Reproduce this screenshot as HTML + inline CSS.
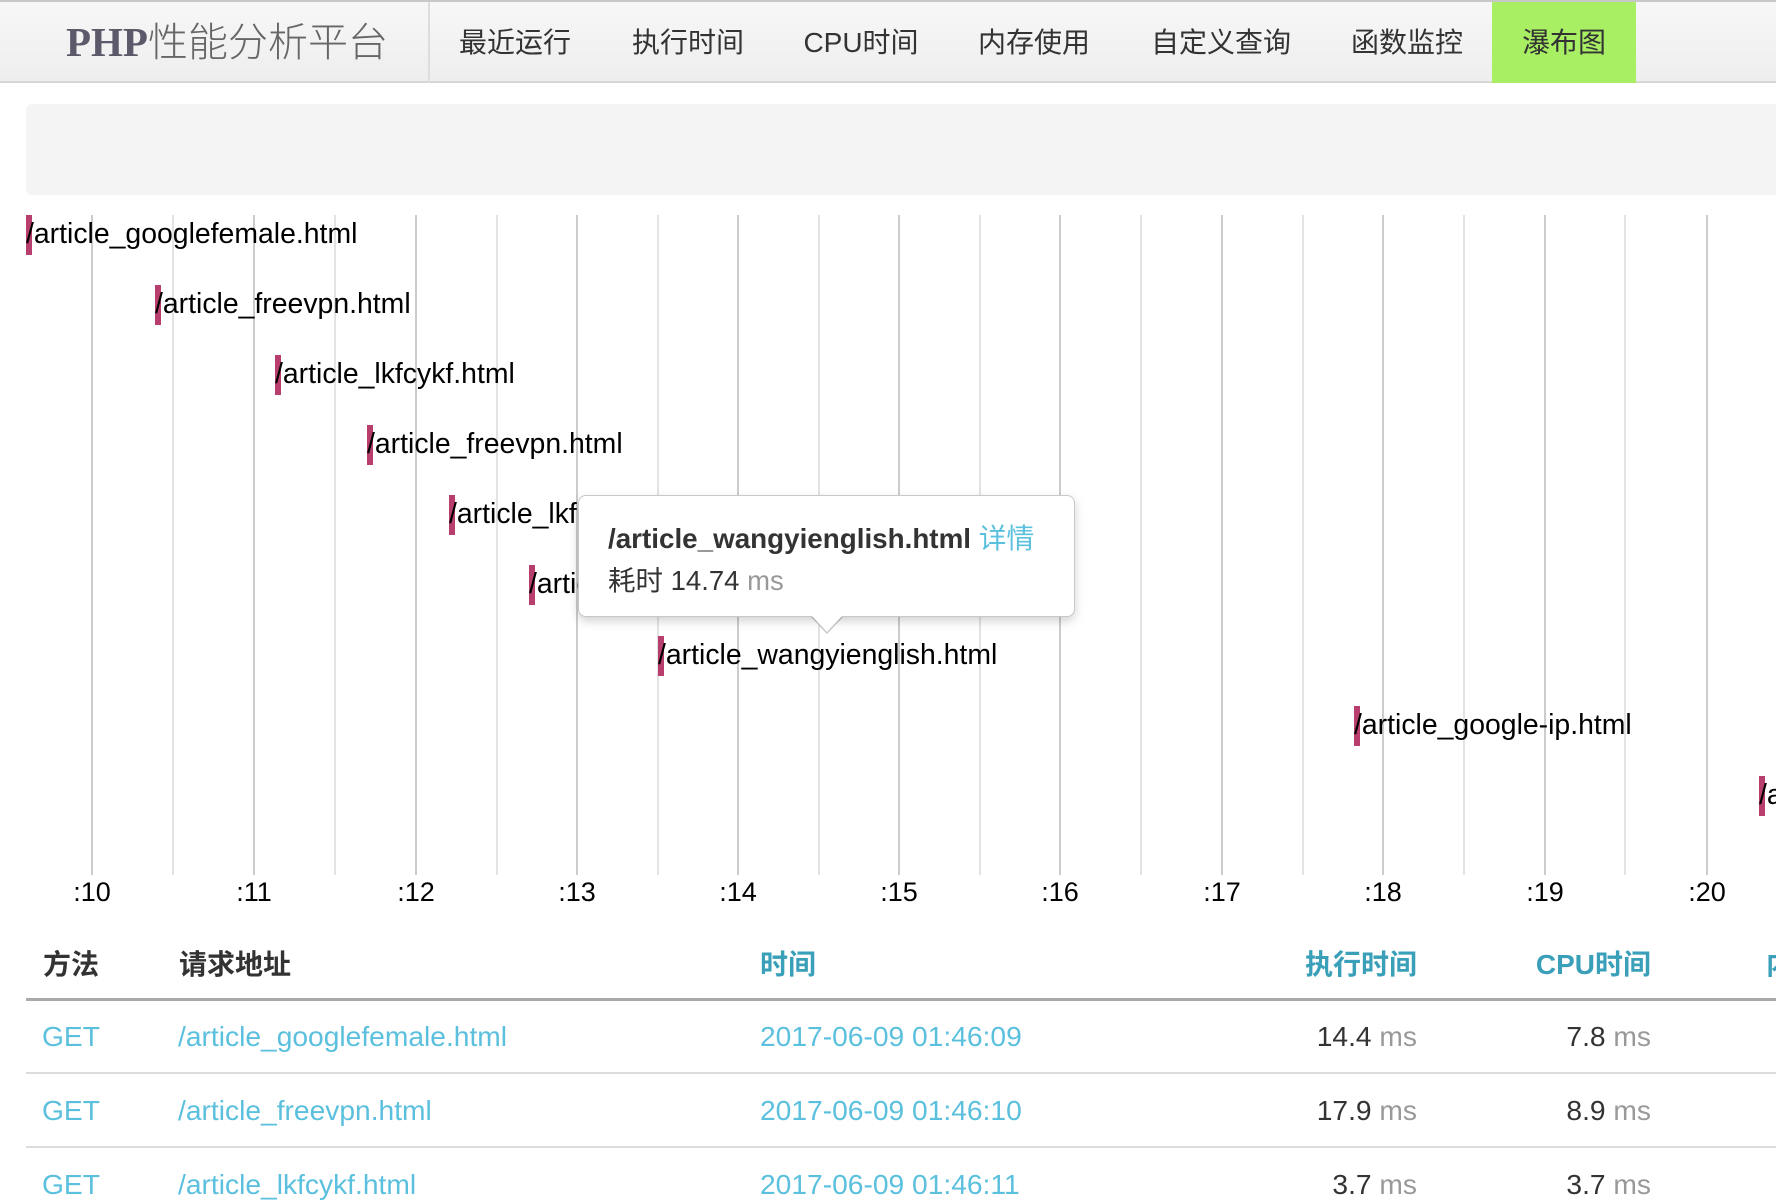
<!DOCTYPE html>
<html><head><meta charset="utf-8"><style>
*{margin:0;padding:0;box-sizing:border-box}
body{width:1776px;height:1196px;overflow:hidden;background:#fff;font-family:"Liberation Sans","Noto Sans CJK SC",sans-serif;position:relative;color:#333}
.nav{position:absolute;left:0;top:0;width:1776px;height:83px;background:linear-gradient(#f7f7f7,#eeeeee);border-top:2px solid #c8c8c8;border-bottom:2px solid #d6d6d6}
.logo{position:absolute;left:66px;top:8px;font-size:40px;color:#666;font-weight:300;white-space:nowrap}
.logo b{font-family:"Liberation Serif",serif;font-weight:bold;color:#5c5a6a;font-size:41px}
.div{position:absolute;left:428px;top:0;width:2px;height:81px;background:#ddd}
.ni{position:absolute;top:19px;font-size:28px;color:#333;transform:translateX(-50%);white-space:nowrap}
.green{position:absolute;left:1492px;top:0;width:144px;height:81px;background:#a8ef64}
.well{position:absolute;left:26px;top:104px;width:1770px;height:91px;background:#f4f4f4;border-radius:6px}
.vl{position:absolute;top:215px;height:660px;width:2px;background:#ccc}
.vl.m{background:#e3e3e3}
.tl{position:absolute;top:877px;font-size:27px;color:#000;transform:translateX(-50%)}
.bar{position:absolute;width:6px;height:40px;background:#b83e6e}
.bt{position:absolute;font-size:28.4px;color:#000;white-space:nowrap}
.tip{position:absolute;left:578px;top:495px;width:497px;height:122px;background:#fff;border:1px solid #c8c8c8;border-radius:8px;box-shadow:0 4px 10px rgba(0,0,0,.18)}
.arr{position:absolute;left:810px;top:616px;width:0;height:0;border-left:17px solid transparent;border-right:17px solid transparent;border-top:18px solid #c8c8c8}
.arr2{position:absolute;left:811px;top:615px;width:0;height:0;border-left:16px solid transparent;border-right:16px solid transparent;border-top:17px solid #fff}
.th{position:absolute;top:943px;font-size:28px;font-weight:bold;white-space:nowrap}
.blue{color:#3a9fb8}
.td{position:absolute;font-size:28.2px;white-space:nowrap}
.lb{color:#5bc0de}
.gr{color:#999}
</style></head><body>
<div class="nav">
<div class="logo"><b>PHP</b>性能分析平台</div>
<div class="div"></div>
<div class="green"></div>
<div class="ni" style="left:515px">最近运行</div>
<div class="ni" style="left:688px">执行时间</div>
<div class="ni" style="left:861px">CPU时间</div>
<div class="ni" style="left:1034px">内存使用</div>
<div class="ni" style="left:1221px">自定义查询</div>
<div class="ni" style="left:1407px">函数监控</div>
<div class="ni" style="left:1564px">瀑布图</div>
</div>
<div class="well"></div>

<div class="vl" style="left:91px"></div><div class="vl m" style="left:172px"></div>
<div class="vl" style="left:253px"></div><div class="vl m" style="left:334px"></div>
<div class="vl" style="left:415px"></div><div class="vl m" style="left:496px"></div>
<div class="vl" style="left:576px"></div><div class="vl m" style="left:657px"></div>
<div class="vl" style="left:737px"></div><div class="vl m" style="left:818px"></div>
<div class="vl" style="left:898px"></div><div class="vl m" style="left:979px"></div>
<div class="vl" style="left:1059px"></div><div class="vl m" style="left:1140px"></div>
<div class="vl" style="left:1221px"></div><div class="vl m" style="left:1302px"></div>
<div class="vl" style="left:1382px"></div><div class="vl m" style="left:1463px"></div>
<div class="vl" style="left:1544px"></div><div class="vl m" style="left:1624px"></div>
<div class="vl" style="left:1706px"></div>

<div class="tl" style="left:92px">:10</div><div class="tl" style="left:254px">:11</div>
<div class="tl" style="left:416px">:12</div><div class="tl" style="left:577px">:13</div>
<div class="tl" style="left:738px">:14</div><div class="tl" style="left:899px">:15</div>
<div class="tl" style="left:1060px">:16</div><div class="tl" style="left:1222px">:17</div>
<div class="tl" style="left:1383px">:18</div><div class="tl" style="left:1545px">:19</div>
<div class="tl" style="left:1707px">:20</div>

<div class="bar" style="left:26px;top:215px"></div><div class="bt" style="left:26px;top:218px">/article_googlefemale.html</div>
<div class="bar" style="left:155px;top:285px"></div><div class="bt" style="left:155px;top:288px">/article_freevpn.html</div>
<div class="bar" style="left:275px;top:355px"></div><div class="bt" style="left:275px;top:358px">/article_lkfcykf.html</div>
<div class="bar" style="left:367px;top:425px"></div><div class="bt" style="left:367px;top:428px">/article_freevpn.html</div>
<div class="bar" style="left:449px;top:495px"></div><div class="bt" style="left:449px;top:498px">/article_lkfcykf.html</div>
<div class="bar" style="left:529px;top:565px"></div><div class="bt" style="left:529px;top:568px">/article_lkfcykf.html</div>
<div class="bar" style="left:658px;top:636px"></div><div class="bt" style="left:658px;top:639px">/article_wangyienglish.html</div>
<div class="bar" style="left:1354px;top:706px"></div><div class="bt" style="left:1354px;top:709px">/article_google-ip.html</div>
<div class="bar" style="left:1759px;top:776px"></div><div class="bt" style="left:1759px;top:779px">/article</div>

<div class="arr"></div>
<div class="tip">
<div style="position:absolute;left:29px;top:21px;font-size:27.8px;font-weight:bold;color:#333;white-space:nowrap">/article_wangyienglish.html <span style="font-weight:normal;color:#5bc0de">详情</span></div>
<div style="position:absolute;left:29px;top:62px;font-size:27.5px;color:#333;white-space:nowrap">耗时 14.74 <span class="gr">ms</span></div>
</div>
<div class="arr2"></div>

<div class="th" style="left:43px">方法</div>
<div class="th" style="left:179px">请求地址</div>
<div class="th blue" style="left:760px">时间</div>
<div class="th blue" style="right:359px">执行时间</div>
<div class="th blue" style="right:125px">CPU时间</div>
<div class="th blue" style="left:1766px">内存</div>
<div style="position:absolute;left:26px;top:998px;width:1750px;height:3px;background:#aaa"></div>
<div style="position:absolute;left:26px;top:1072px;width:1750px;height:2px;background:#ddd"></div>
<div style="position:absolute;left:26px;top:1146px;width:1750px;height:2px;background:#ddd"></div>

<div class="td lb" style="left:42px;top:1020px">GET</div>
<div class="td lb" style="left:178px;top:1020px">/article_googlefemale.html</div>
<div class="td lb" style="left:760px;top:1020px">2017-06-09 01:46:09</div>
<div class="td" style="right:359px;top:1020px">14.4 <span class="gr">ms</span></div>
<div class="td" style="right:125px;top:1020px">7.8 <span class="gr">ms</span></div>

<div class="td lb" style="left:42px;top:1094px">GET</div>
<div class="td lb" style="left:178px;top:1094px">/article_freevpn.html</div>
<div class="td lb" style="left:760px;top:1094px">2017-06-09 01:46:10</div>
<div class="td" style="right:359px;top:1094px">17.9 <span class="gr">ms</span></div>
<div class="td" style="right:125px;top:1094px">8.9 <span class="gr">ms</span></div>

<div class="td lb" style="left:42px;top:1168px">GET</div>
<div class="td lb" style="left:178px;top:1168px">/article_lkfcykf.html</div>
<div class="td lb" style="left:760px;top:1168px">2017-06-09 01:46:11</div>
<div class="td" style="right:359px;top:1168px">3.7 <span class="gr">ms</span></div>
<div class="td" style="right:125px;top:1168px">3.7 <span class="gr">ms</span></div>
</body></html>
